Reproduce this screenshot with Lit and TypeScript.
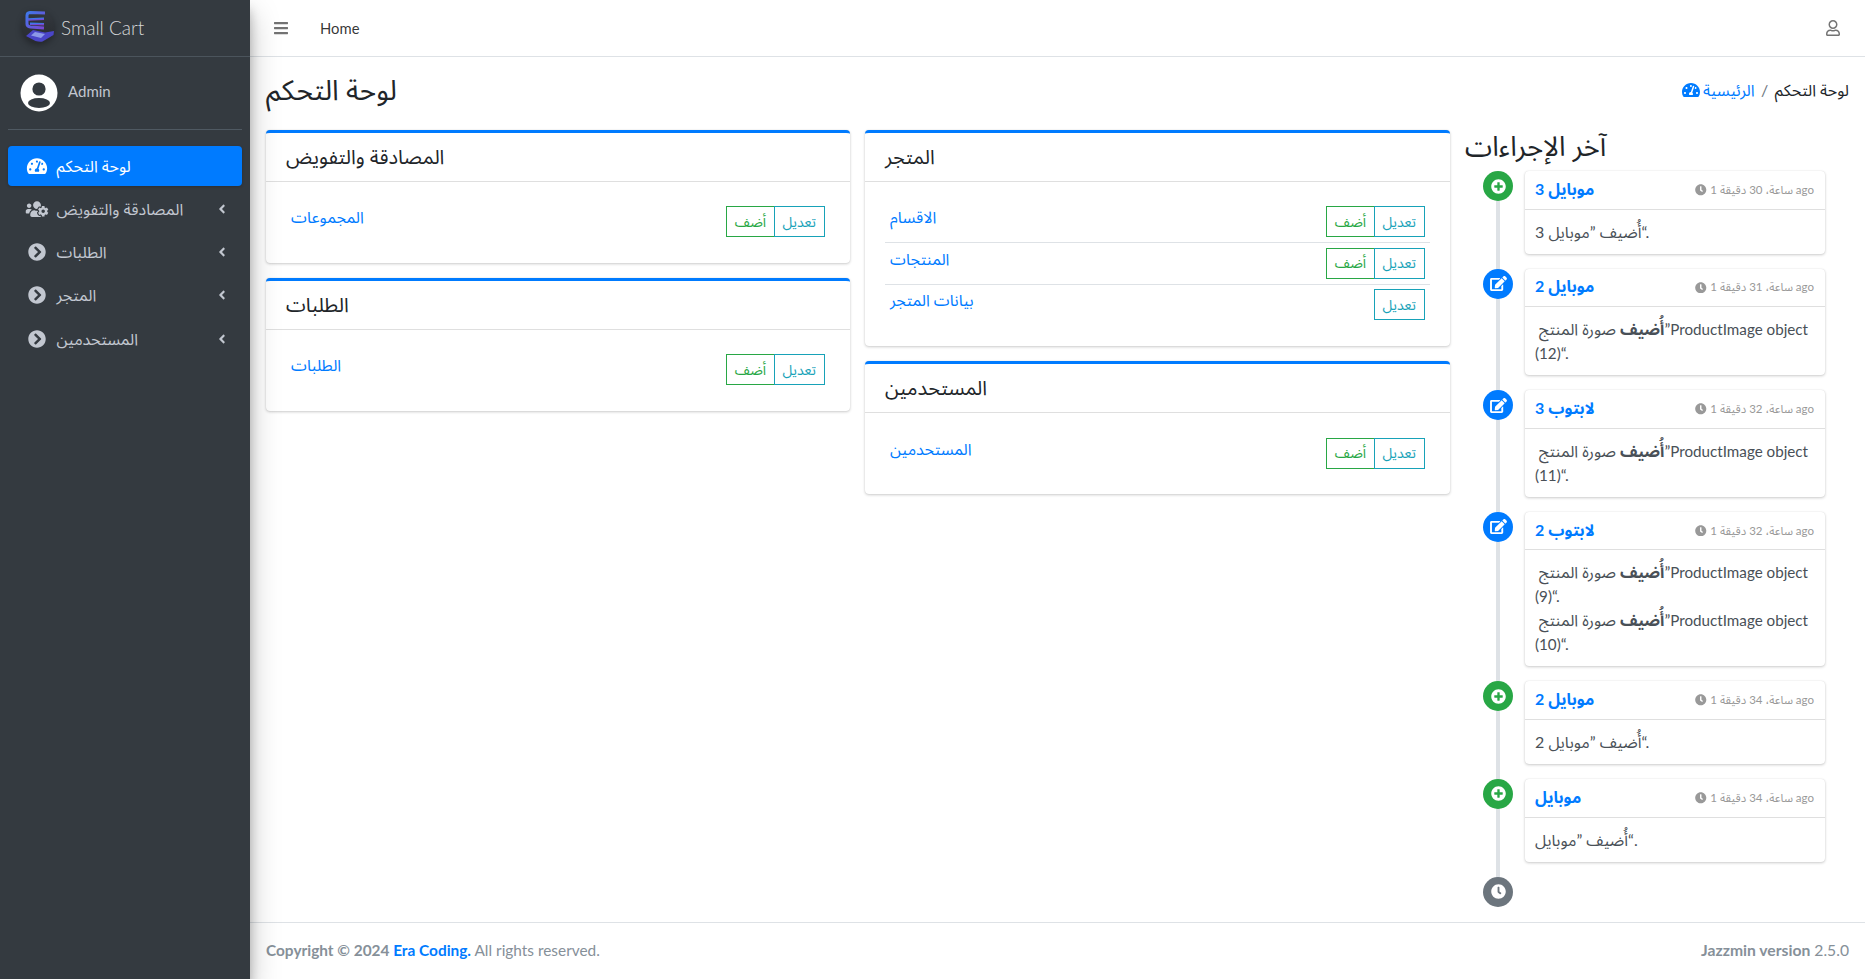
import { LitElement, html, css, svg } from "lit";
import { customElement } from "lit/decorators.js";

const P = {
  gauge: [576, "M288 32C128.94 32 0 160.94 0 320c0 52.8 14.25 102.26 39.06 144.8 5.61 9.62 16.3 15.2 27.44 15.2h443c11.14 0 21.83-5.58 27.44-15.2C561.75 422.26 576 372.8 576 320c0-159.06-128.94-288-288-288zm0 64c14.71 0 26.58 10.13 30.32 23.65-1.11 2.26-2.64 4.23-3.45 6.67l-9.22 27.67c-5.13 3.49-10.97 6.01-17.64 6.01-17.67 0-32-14.33-32-32S270.33 96 288 96zM96 384c-17.67 0-32-14.33-32-32s14.33-32 32-32 32 14.33 32 32-14.33 32-32 32zm48-160c-17.67 0-32-14.33-32-32s14.33-32 32-32 32 14.33 32 32-14.33 32-32 32zm246.77-72.41l-61.33 184C343.13 347.33 352 364.54 352 384c0 11.72-3.38 22.55-8.88 32H232.88c-5.5-9.45-8.88-20.28-8.88-32 0-33.94 26.5-61.43 59.9-63.59l61.34-184.01c4.17-12.56 17.73-19.45 30.36-15.17 12.57 4.19 19.35 17.79 15.17 30.36zm14.66 57.2l15.52-46.55c3.47-1.29 7.13-2.23 11.05-2.23 17.67 0 32 14.33 32 32s-14.33 32-32 32c-11.38-.01-20.89-6.28-26.57-15.22zM480 384c-17.67 0-32-14.33-32-32s14.33-32 32-32 32 14.33 32 32-14.33 32-32 32z"],
  usersCog: [640, "M610.5 341.3c2.6-14.1 2.6-28.5 0-42.6l25.8-14.9c3-1.7 4.3-5.2 3.3-8.5-6.7-21.6-18.2-41.2-33.2-57.4-2.3-2.5-6-3.1-9-1.4l-25.8 14.9c-10.9-9.3-23.4-16.5-36.9-21.3v-29.8c0-3.4-2.4-6.4-5.7-7.1-22.3-5-45-4.8-66.2 0-3.3.7-5.7 3.7-5.7 7.1v29.8c-13.5 4.8-26 12-36.9 21.3l-25.8-14.9c-2.9-1.7-6.7-1.1-9 1.4-15 16.2-26.5 35.8-33.2 57.4-1 3.3.4 6.8 3.3 8.5l25.8 14.9c-2.6 14.1-2.6 28.5 0 42.6l-25.8 14.9c-3 1.7-4.3 5.2-3.3 8.5 6.7 21.6 18.2 41.1 33.2 57.4 2.3 2.5 6 3.1 9 1.4l25.8-14.9c10.9 9.3 23.4 16.5 36.9 21.3v29.8c0 3.4 2.4 6.4 5.7 7.1 22.3 5 45 4.8 66.2 0 3.3-.7 5.7-3.7 5.7-7.1v-29.8c13.5-4.8 26-12 36.9-21.3l25.8 14.9c2.9 1.7 6.7 1.1 9-1.4 15-16.2 26.5-35.8 33.2-57.4 1-3.3-.4-6.8-3.3-8.5l-25.8-14.9zM496 368.5c-26.8 0-48.5-21.8-48.5-48.5s21.8-48.5 48.5-48.5 48.5 21.8 48.5 48.5-21.7 48.5-48.5 48.5zM96 224c35.3 0 64-28.7 64-64s-28.7-64-64-64-64 28.7-64 64 28.7 64 64 64zm224 32c1.9 0 3.7-.5 5.6-.6 8.3-21.7 20.5-42.1 36.3-59.2 7.4-8 17.9-12.6 28.9-12.6 6.9 0 13.7 1.8 19.6 5.3l7.9 4.6c.8-.5 1.6-.9 2.4-1.4 7-14.6 11.2-30.8 11.2-48 0-61.9-50.1-112-112-112S208 82.1 208 144c0 61.9 50.1 112 112 112zm105.2 194.5c-2.3-1.2-4.6-2.6-6.8-3.9-8.2 4.8-15.3 9.8-27.5 9.8-10.9 0-21.4-4.6-28.9-12.6-18.3-19.8-32.3-43.9-40.2-69.6-10.7-34.5 24.9-49.7 25.8-50.3-.1-2.6-.1-5.2 0-7.8l-7.9-4.6c-3.8-2.2-7-5-9.8-8.1-3.3.2-6.5.6-9.8.6-24.6 0-47.6-6-68.5-16h-8.3C179.6 288 128 339.6 128 403.2V432c0 26.5 21.5 48 48 48h255.4c-3.7-6-6.2-12.8-6.2-20.3v-9.2zM173.1 274.6C161.5 263.1 145.6 256 128 256H64c-35.3 0-64 28.7-64 64v32c0 17.7 14.3 32 32 32h65.9c6.3-47.4 34.9-87.3 75.2-109.4z"],
  chevCircle: [512, "M256 8c137 0 248 111 248 248S393 504 256 504 8 393 8 256 119 8 256 8zm113.9 231L234.4 103.5c-9.4-9.4-24.6-9.4-33.9 0l-17 17c-9.4 9.4-9.4 24.6 0 33.9L285.1 256 183.5 357.6c-9.4 9.4-9.4 24.6 0 33.9l17 17c9.4 9.4 24.6 9.4 33.9 0L369.9 273c9.4-9.4 9.4-24.6 0-34z"],
  angle: [256, "M31.7 239l136-136c9.4-9.4 24.6-9.4 33.9 0l22.6 22.6c9.4 9.4 9.4 24.6 0 33.9L127.9 256l96.4 96.4c9.4 9.4 9.4 24.6 0 33.9L201.7 409c-9.4 9.4-24.6 9.4-33.9 0l-136-136c-9.5-9.4-9.5-24.6-.1-34z"],
  plus: [512, "M256 8C119 8 8 119 8 256s111 248 248 248 248-111 248-248S393 8 256 8zm144 276c0 6.6-5.4 12-12 12h-92v92c0 6.6-5.4 12-12 12h-56c-6.6 0-12-5.4-12-12v-92h-92c-6.6 0-12-5.4-12-12v-56c0-6.6 5.4-12 12-12h92v-92c0-6.6 5.4-12 12-12h56c6.6 0 12 5.4 12 12v92h92c6.6 0 12 5.4 12 12v56z"],
  edit: [576, "M402.6 83.2l90.2 90.2c3.8 3.8 3.8 10 0 13.8L274.4 405.6l-92.8 10.3c-12.4 1.4-22.9-9.1-21.5-21.5l10.3-92.8L388.8 83.2c3.8-3.8 10-3.8 13.8 0zm162-22.9l-48.8-48.8c-15.2-15.2-39.9-15.2-55.2 0l-35.4 35.4c-3.8 3.8-3.8 10 0 13.8l90.2 90.2c3.8 3.8 10 3.8 13.8 0l35.4-35.4c15.2-15.3 15.2-40 0-55.2zM384 346.2V448H64V128h229.8c3.2 0 6.2-1.3 8.5-3.5l40-40c7.6-7.6 2.2-20.5-8.5-20.5H48C21.5 64 0 85.5 0 112v352c0 26.5 21.5 48 48 48h352c26.5 0 48-21.5 48-48V306.2c0-10.7-12.9-16-20.5-8.5l-40 40c-2.2 2.3-3.5 5.3-3.5 8.5z"],
  clock: [512, "M256,8C119,8,8,119,8,256S119,504,256,504,504,393,504,256,393,8,256,8Zm92.49,313h0l-20,25a16,16,0,0,1-22.49,2.5h0l-67-49.72a40,40,0,0,1-15-31.23V112a16,16,0,0,1,16-16h32a16,16,0,0,1,16,16V256l58,42.5A16,16,0,0,1,348.49,321Z"],
  bars: [448, "M16 132h416c8.837 0 16-7.163 16-16V76c0-8.837-7.163-16-16-16H16C7.163 60 0 67.163 0 76v40c0 8.837 7.163 16 16 16zm0 160h416c8.837 0 16-7.163 16-16v-40c0-8.837-7.163-16-16-16H16c-8.837 0-16 7.163-16 16v40c0 8.837 7.163 16 16 16zm0 160h416c8.837 0 16-7.163 16-16v-40c0-8.837-7.163-16-16-16H16c-8.837 0-16 7.163-16 16v40c0 8.837 7.163 16 16 16z"],
  user: [448, "M313.6 304c-28.7 0-42.5 16-89.6 16-47.1 0-60.8-16-89.6-16C60.2 304 0 364.2 0 438.4V464c0 26.5 21.5 48 48 48h352c26.5 0 48-21.5 48-48v-25.6c0-74.2-60.2-134.4-134.4-134.4zM400 464H48v-25.6c0-47.6 38.8-86.4 86.4-86.4 14.6 0 38.3 16 89.6 16 51.7 0 74.9-16 89.6-16 47.6 0 86.4 38.8 86.4 86.4V464zM224 288c79.5 0 144-64.5 144-144S303.5 0 224 0 80 64.5 80 144s64.5 144 144 144zm0-240c52.9 0 96 43.1 96 96s-43.1 96-96 96-96-43.1-96-96 43.1-96 96-96z"],
} as const;

type IconName = keyof typeof P;
const icon = (n: IconName, cls: string) =>
  html`<svg class=${cls} viewBox="0 0 ${P[n][0]} 512" fill="currentColor"><path d=${P[n][1]}></path></svg>`;

const logo = html`<svg class="logo" viewBox="0 0 36 36">
  <defs>
    <linearGradient id="lg" x1="0" y1="0" x2="1" y2="1"><stop offset="0" stop-color="#3f78ea"></stop><stop offset="1" stop-color="#7a45d2"></stop></linearGradient>
    <linearGradient id="bg" x1="0" y1="0" x2="0" y2="1"><stop offset="0" stop-color="#33383e"></stop><stop offset="1" stop-color="#282b30"></stop></linearGradient>
  </defs>
  <circle cx="18" cy="18" r="16.500" fill="url(#bg)"></circle>
  ${svg`<path d="M25 4 L10 3.500 Q7 3.800 7 6.500 L7 15 Q7 17.500 10.500 18 L24 19" fill="none" stroke="url(#lg)" stroke-width="3"></path>
  <path d="M8 10.500 L24 9.800" fill="none" stroke="url(#lg)" stroke-width="2.600"></path>
  <path d="M24 15.300 L10 14.800" fill="none" stroke="url(#lg)" stroke-width="2.400"></path>
  <path d="M6 27l7-6 12 2.500 9-1.500-.5 4-11 6.500q-3 .6-7-.6z" fill="#4a45c8"></path>
  <path d="M11 26.500l4-3.500 10 2-4 4z" fill="#8c98e8"></path>`}
</svg>`;

const avatar = html`<svg class="avatar" viewBox="0 0 38 38">
  <circle cx="19" cy="19" r="18.500" fill="#fff"></circle>
  <circle cx="19" cy="15" r="6.600" fill="#343a40"></circle>
  <ellipse cx="19" cy="29" rx="11" ry="5" fill="#343a40"></ellipse>
</svg>`;

const NAV: [string, IconName, boolean][] = [
  ["لوحة التحكم", "gauge", false],
  ["المصادقة والتفويض", "usersCog", true],
  ["الطلبات", "chevCircle", true],
  ["المتجر", "chevCircle", true],
  ["المستحدمين", "chevCircle", true],
];

type Row = { label: string; add: boolean };
type Card = { title: string; rows: Row[] };
const COL1: Card[] = [
  { title: "المصادقة والتفويض", rows: [{ label: "المجموعات", add: true }] },
  { title: "الطلبات", rows: [{ label: "الطلبات", add: true }] },
];
const COL2: Card[] = [
  {
    title: "المتجر",
    rows: [
      { label: "الاقسام", add: true },
      { label: "المنتجات", add: true },
      { label: "بيانات المتجر", add: false },
    ],
  },
  { title: "المستحدمين", rows: [{ label: "المستحدمين", add: true }] },
];

const imgLine = (n: number) =>
  html`<div><span class="nw"><b>أُضيف</b> صورة المنتج &#x200f;”<span class="lat">ProductImage object</span></span> <span class="lat">(${n})</span>“.</div>`;
const addLine = (name: string) => html`<div>أُضيف ”${name}“.</div>`;

const EVENTS: { ic: IconName; tone: string; title: string; time: string; body: unknown }[] = [
  { ic: "plus", tone: "green", title: "موبايل 3", time: "1 ساعة، 30 دقيقة ago", body: addLine("موبايل 3") },
  { ic: "edit", tone: "blue", title: "موبايل 2", time: "1 ساعة، 31 دقيقة ago", body: imgLine(12) },
  { ic: "edit", tone: "blue", title: "لابتوب 3", time: "1 ساعة، 32 دقيقة ago", body: imgLine(11) },
  { ic: "edit", tone: "blue", title: "لابتوب 2", time: "1 ساعة، 32 دقيقة ago", body: html`${imgLine(9)}${imgLine(10)}` },
  { ic: "plus", tone: "green", title: "موبايل 2", time: "1 ساعة، 34 دقيقة ago", body: addLine("موبايل 2") },
  { ic: "plus", tone: "green", title: "موبايل", time: "1 ساعة، 34 دقيقة ago", body: addLine("موبايل") },
];

@customElement("app-root")
export class AppRoot extends LitElement {
  static styles = css`
    :host {
      display: block;
      font-family: "Lato", "Noto Sans Arabic", sans-serif;
      font-size: 16px;
      line-height: 24px;
      color: #212529;
      background: #fff;
    }
    * { box-sizing: border-box; }
    a { color: #007bff; text-decoration: none; }
    .page { display: flex; min-height: 979px; }
    .side {
      width: 250px; flex: none; background: #343a40; color: #c2c7d0;
      box-shadow: 0 14px 28px rgba(0,0,0,.25), 0 10px 10px rgba(0,0,0,.22);
      position: relative; z-index: 2;
    }
    .brand {
      height: 57px; display: flex; align-items: center; gap: 5px;
      padding-left: 20px; border-bottom: 1px solid #4b545c;
      font-size: 19px; font-weight: 300; color: rgba(255,255,255,.8);
    }
    .logo { width: 36px; height: 36px; margin-top: -3px; filter: drop-shadow(0 2px 3px rgba(0,0,0,.3)); }
    .userpanel {
      margin: 0 8px; height: 73px; display: flex; align-items: center;
      gap: 10px; padding-left: 12px; border-bottom: 1px solid #4f5962;
      font-size: 15px;
    }
    .userpanel span { margin-bottom: 5px; }
    .avatar { width: 38px; height: 38px; }
    .nav { padding: 16px 8px 0; display: flex; flex-direction: column; gap: 3.15px; }
    .item {
      height: 40px; display: flex; align-items: center; padding: 0 16px 0 18px;
      border-radius: 4px; color: #c2c7d0;
    }
    .item.on { background: #007bff; color: #fff; box-shadow: 0 1px 3px rgba(0,0,0,.2); }
    .nic { width: 24px; height: 18px; margin-right: 7.500px; margin-left: -1px; flex: none; }
    .item span { flex: 1; }
    .ang { width: 8px; height: 14px; flex: none; }

    .main { flex: 1; min-width: 0; display: flex; flex-direction: column; }
    .top {
      height: 57px; display: flex; align-items: center;
      padding: 0 16px 0 24px; border-bottom: 1px solid #dee2e6; color: rgba(0,0,0,.8);
      font-size: 14.8px;
    }
    .bars { width: 14px; height: 16px; color: rgba(0,0,0,.55); margin-right: 32px; }
    .top .grow { flex: 1; }
    .uic { width: 14px; height: 16px; color: rgba(0,0,0,.55); margin-right: 9px; }

    .content { flex: 1; padding: 0 16px; }
    .chead { height: 73px; display: flex; align-items: center; justify-content: space-between; padding-bottom: 8px; }
    h1 { margin: 0; font-size: 28.2px; font-weight: 400; line-height: 1.2; }
    .crumb { display: flex; align-items: center; gap: 6.500px; }
    .crumb a { display: flex; align-items: center; gap: 3px; }
    .crumb .sep { color: #6c757d; }
    .cic { width: 18px; height: 16px; }

    .grid { display: grid; grid-template-columns: 584px 585px 1fr; column-gap: 15px; align-items: start; }
    .col { display: flex; flex-direction: column; gap: 15.6px; }
    .card {
      background: #fff; border-top: 3px solid #007bff; border-radius: 4px;
      box-shadow: 0 0 1px rgba(0,0,0,.125), 0 1px 3px rgba(0,0,0,.2);
    }
    .chd {
      height: 49px; padding: 0 20px 2px; display: flex; align-items: center;
      font-size: 20px; border-bottom: 1px solid rgba(0,0,0,.125);
    }
    .cbd { padding: 19.500px 20px 20.500px; }
    .row { display: flex; justify-content: space-between; align-items: flex-start; padding: 4.8px 5.5px 4.8px 5px; border-top: 1px solid #dee2e6; }
    .row:first-child { border-top: 0; }
    .row > a { margin-top: -1px; }
    .btns { display: flex; }
    .btn { height: 31px; display: flex; align-items: center; justify-content: center; font-size: 14px; border: 1px solid; background: #fff; }
    .add { color: #28a745; border-color: #28a745; width: 49px; }
    .chg { color: #17a2b8; border-color: #17a2b8; margin-left: -1px; width: 50.5px; }

    h2 { margin: 0 0 9px; font-size: 27.5px; font-weight: 400; line-height: 32px; }
    .tl { position: relative; padding-left: 18px; display: flex; flex-direction: column; gap: 15px; }
    .tl::before {
      content: ""; position: absolute; left: 31px; top: 15px; bottom: 15px; width: 4px; background: #dee2e6;
    }
    .ev { display: flex; gap: 12px; align-items: flex-start; position: relative; }
    .dot {
      width: 30px; height: 30px; border-radius: 50%; flex: none; color: #fff;
      display: flex; align-items: center; justify-content: center;
    }
    .green { background: #28a745; } .blue { background: #007bff; } .gray { background: #6c757d; }
    .dic { width: 15px; height: 15px; }
    .dic.wide { width: 17px; height: 15px; }
    .ecard {
      width: 300px; background: #fff; border-radius: 4px;
      box-shadow: 0 0 1px rgba(0,0,0,.125), 0 1px 3px rgba(0,0,0,.2);
    }
    .ehd {
      height: 38.6px; padding: 0 11px 0 10px; display: flex; align-items: center; justify-content: space-between;
      border-bottom: 1px solid rgba(0,0,0,.125);
    }
    .ehd a { font-weight: 700; margin-top: -2px; }
    .time { color: #999; font-size: 11.5px; display: flex; align-items: center; gap: 3.500px; }
    .tic { width: 11.5px; height: 11.5px; }
    .ebd { padding: 10px; color: #495057; width: 290px; }
    .nw { white-space: nowrap; }
    .lat { font-size: 15.2px; }

    .foot {
      height: 57px; display: flex; align-items: center; justify-content: space-between;
      padding: 0 16px 2px; border-top: 1px solid #dee2e6; color: #869099; font-size: 15.4px;
    }
    .foot .ver { font-size: 15.7px; }
  `;

  private block(c: Card) {
    return html`<section class="card">
      <div class="chd">${c.title}</div>
      <div class="cbd">
        ${c.rows.map(
          (r) => html`<div class="row">
            <a href="#">${r.label}</a>
            <div class="btns">
              ${r.add ? html`<a class="btn add" href="#">أضف</a>` : ""}
              <a class="btn chg" href="#">تعديل</a>
            </div>
          </div>`
        )}
      </div>
    </section>`;
  }

  render() {
    return html`<div class="page">
      <aside class="side">
        <div class="brand">${logo}<span>Small Cart</span></div>
        <div class="userpanel">${avatar}<span>Admin</span></div>
        <nav class="nav">
          ${NAV.map(
            ([t, ic, sub], i) => html`<a class="item ${i === 0 ? "on" : ""}" href="#">
              ${icon(ic, "nic")}<span>${t}</span>${sub ? icon("angle", "ang") : ""}
            </a>`
          )}
        </nav>
      </aside>
      <div class="main">
        <header class="top">
          ${icon("bars", "bars")}<span>Home</span><span class="grow"></span>${icon("user", "uic")}
        </header>
        <main class="content">
          <div class="chead">
            <h1>لوحة التحكم</h1>
            <div class="crumb">
              <a href="#">${icon("gauge", "cic")}<span>الرئيسية</span></a>
              <span class="sep">/</span>
              <span>لوحة التحكم</span>
            </div>
          </div>
          <div class="grid">
            <div class="col">${COL1.map((c) => this.block(c))}</div>
            <div class="col">${COL2.map((c) => this.block(c))}</div>
            <div>
              <h2>آخر الإجراءات</h2>
              <div class="tl">
                ${EVENTS.map(
                  (e) => html`<div class="ev">
                    <div class="dot ${e.tone}">${icon(e.ic, e.ic === "edit" ? "dic wide" : "dic")}</div>
                    <div class="ecard">
                      <div class="ehd">
                        <a href="#">${e.title}</a>
                        <span class="time">${icon("clock", "tic")}<span>${e.time}</span></span>
                      </div>
                      <div class="ebd">${e.body}</div>
                    </div>
                  </div>`
                )}
                <div class="ev"><div class="dot gray">${icon("clock", "dic")}</div></div>
              </div>
            </div>
          </div>
        </main>
        <footer class="foot">
          <div><strong>Copyright © 2024 <a href="#">Era Coding.</a></strong> All rights reserved.</div>
          <div class="ver"><strong>Jazzmin version</strong> 2.5.0</div>
        </footer>
      </div>
    </div>`;
  }
}
